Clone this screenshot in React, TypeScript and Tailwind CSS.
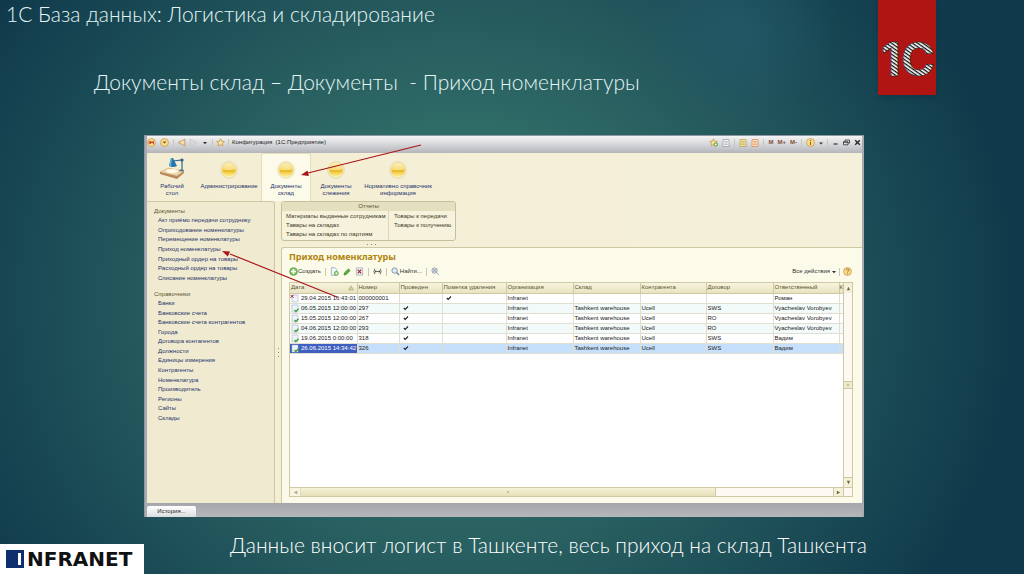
import type { ReactNode } from "react";

interface DocRow {
    state: "deleted" | "posted";
    date: string;
    number: string;
    posted: boolean;
    marked: boolean;
    org: string;
    store: string;
    agent: string;
    contract: string;
    person: string;
}

const rows: DocRow[] = [
    { state: "deleted", date: "29.04.2015 16:43:01", number: "000000001", posted: false, marked: true, org: "Infranet", store: "", agent: "", contract: "", person: "Роман" },
    { state: "posted", date: "06.05.2015 12:00:00", number: "297", posted: true, marked: false, org: "Infranet", store: "Tashkent warehouse", agent: "Ucell", contract: "SWS", person: "Vyacheslav Vorobyev" },
    { state: "posted", date: "15.05.2015 12:00:00", number: "267", posted: true, marked: false, org: "Infranet", store: "Tashkent warehouse", agent: "Ucell", contract: "RO", person: "Vyacheslav Vorobyev" },
    { state: "posted", date: "04.06.2015 12:00:00", number: "293", posted: true, marked: false, org: "Infranet", store: "Tashkent warehouse", agent: "Ucell", contract: "RO", person: "Vyacheslav Vorobyev" },
    { state: "posted", date: "19.06.2015 0:00:00", number: "318", posted: true, marked: false, org: "Infranet", store: "Tashkent warehouse", agent: "Ucell", contract: "SWS", person: "Вадим" },
    { state: "posted", date: "26.06.2015 14:34:42", number: "326", posted: true, marked: false, org: "Infranet", store: "Tashkent warehouse", agent: "Ucell", contract: "SWS", person: "Вадим" },
];

const documents = [
    "Акт приёмо передачи сотруднику",
    "Оприходование номенклатуры",
    "Перемещение номенклатуры",
    "Приход номенклатуры",
    "Приходный ордер на товары",
    "Расходный ордер на товары",
    "Списание номенклатуры",
];

const catalogs = [
    "Банки",
    "Банковские счета",
    "Банковские счета контрагентов",
    "Города",
    "Договора контагентов",
    "Должности",
    "Единицы измерения",
    "Контрагенты",
    "Номенклатура",
    "Производитель",
    "Регионы",
    "Сайты",
    "Склады",
];

const columns = ["Дата", "Номер", "Проведен", "Пометка удаления", "Организация", "Склад", "Контрагента", "Договор", "Ответственный"];

const Divider = () => <span className="h-2 w-px shrink-0 bg-[#c9c6b4]" />;

const Tick = () => (
    <svg className="size-[6px]" viewBox="0 0 6 6" fill="none" stroke="#222" strokeWidth="1.1">
        <path d="M.8 3l1.400 1.500L5 1.500" />
    </svg>
);

const Ball = () => (
    <svg className="size-[18px]" viewBox="0 0 18 18">
        <defs>
            <linearGradient id="ball" x1="0" y1="0" x2="0" y2="1">
                <stop offset="0" stopColor="#fbe793" />
                <stop offset=".45" stopColor="#f3cd3c" />
                <stop offset=".55" stopColor="#eec02a" />
                <stop offset="1" stopColor="#fdf3a4" />
            </linearGradient>
        </defs>
        <circle cx="9" cy="9" r="8.200" fill="#f8f0cf" stroke="#dccb92" strokeWidth=".7" />
        <circle cx="9" cy="9" r="6.900" fill="url(#ball)" />
        <path d="M3 8.200a6 5.400 0 0 1 12 0q-6 1.800-12 0z" fill="#fff" opacity=".35" />
        <path d="M3.200 9.800q5.800 1.600 11.600 0" stroke="#e0b02c" strokeWidth=".6" fill="none" />
    </svg>
);

const Desk = () => (
    <svg className="h-[22px] w-[26px]" viewBox="0 0 26 22">
        <path d="M1 15l8-4 16 3-7 5z" fill="#efd7ac" stroke="#c79f6a" strokeWidth=".5" />
        <path d="M1 15l17 4 7-5v2l-7 6L1 17z" fill="#b98a5c" />
        <ellipse cx="13" cy="14" rx="6" ry="2" fill="#fffbe6" />
        <path d="M12 1h2l4 8q-4 2-8 0z" fill="#2777ab" />
        <path d="M12 1h1l-1 8-2-.5z" fill="#64b6d8" />
        <path d="M14 4l9-1v10" fill="none" stroke="#35678f" strokeWidth="1.200" />
        <circle cx="23" cy="3" r="1.600" fill="#315f8c" />
        <ellipse cx="22.500" cy="13.500" rx="2.500" ry="1" fill="#587791" />
    </svg>
);

const Star = ({ add }: { add?: boolean }) => (
    <svg className="size-[9px]" viewBox="0 0 10 10">
        <path d="M5 .8l1.300 2.800 3 .3-2.300 2 .7 3L5 7.400 2.300 8.900l.7-3-2.300-2 3-.3z" fill="#fbe2a0" stroke="#c49042" strokeWidth=".8" />
        {add && <circle cx="7.500" cy="7.300" r="2.400" fill="#5fae4a" />}
        {add && <path d="M7.500 6v2.600M6.200 7.300h2.600" stroke="#fff" strokeWidth=".8" />}
    </svg>
);

const Sheet = ({ fill, line }: { fill: string; line: string }) => (
    <svg className="size-2" viewBox="0 0 8 8">
        <path d="M1 .5h6v7H1z" fill={fill} stroke={line} strokeWidth=".7" />
        <path d="M2.300 2.500h3.400M2.300 4h3.400M2.300 5.500h3.400" stroke={line} strokeWidth=".6" />
    </svg>
);

const Orb = ({ children }: { children: ReactNode }) => (
    <svg className="size-[9px]" viewBox="0 0 10 10">
        <circle cx="5" cy="5" r="4.400" fill="#fbdc8b" stroke="#c3974c" strokeWidth=".8" />
        {children}
    </svg>
);

const TitleBar = () => (
    <div className="flex h-[17px] items-center bg-linear-to-b from-[#f4f4f5] via-[#d5d6d9] to-[#b4b5ba] pr-px pb-1 text-[#222]">
        <div className="flex flex-1 items-center gap-[3px] whitespace-nowrap">
            <button aria-label="1С">
                <Orb><path d="M2.500 3.500v3M4 6.500v-3l1.500 2 1.500-2v3h1" stroke="#c0261b" strokeWidth="1" fill="none" /></Orb>
            </button>
            <button aria-label="Меню" className="px-px">
                <Orb><path d="M3 4h4L5 6.500z" fill="#7a5420" /></Orb>
            </button>
            <Divider />
            <button aria-label="Назад">
                <svg className="size-[9px]" viewBox="0 0 8 8"><path d="M7 1v6L1 4z" fill="#f8dcae" stroke="#bb8b52" strokeWidth=".7" /></svg>
            </button>
            <button aria-label="Вперед">
                <svg className="size-[9px]" viewBox="0 0 8 8"><path d="M1 1v6l6-3z" fill="#d9d9da" stroke="#c4c4c4" strokeWidth=".6" /></svg>
            </button>
            <button aria-label="Список">
                <svg className="size-2" viewBox="0 0 8 8"><path d="M2 3h4L4 5.200z" fill="#333" /></svg>
            </button>
            <Divider />
            <button aria-label="Избранное"><Star /></button>
            <Divider />
            <h2 className="whitespace-pre">Конфигурация  (1С:Предприятие)</h2>
        </div>
        <div className="flex items-center gap-1 font-bold text-[#7c5138]">
            <button aria-label="Добавить в избранное"><Star add /></button>
            <button aria-label="Ссылка"><Sheet fill="#fafafa" line="#8a94a0" /></button>
            <Divider />
            <button aria-label="Калькулятор"><Sheet fill="#f5e4a0" line="#b09a50" /></button>
            <button aria-label="Календарь"><Sheet fill="#fbe0c0" line="#d98852" /></button>
            <Divider />
            <button>M</button>
            <button>M+</button>
            <button>M-</button>
            <Divider />
            <button aria-label="Информация">
                <Orb><path d="M5 2.200v1.200M5 4.300v3.500" stroke="#8c6428" strokeWidth="1.200" /></Orb>
            </button>
            <svg className="size-1" viewBox="0 0 4 4"><path d="M0 1.500h4L2 3.500z" fill="#333" /></svg>
            <Divider />
            <button aria-label="Свернуть">
                <svg className="size-[7px]" viewBox="0 0 7 7"><path d="M1.500 5h4" stroke="#333" strokeWidth="1.200" /></svg>
            </button>
            <button aria-label="Восстановить">
                <svg className="size-[7px]" viewBox="0 0 7 7" fill="none" stroke="#333" strokeWidth=".8"><path d="M2 2.500V1h4.500v3H5M.5 2.800H5v3H.5zM.5 3.200H5" /></svg>
            </button>
            <button aria-label="Закрыть">
                <svg className="size-[7px]" viewBox="0 0 7 7" stroke="#222" strokeWidth="1.300"><path d="M1.200 1.200l4.600 4.600M5.800 1.200L1.200 5.800" /></svg>
            </button>
        </div>
    </div>
);

const Sections = () => (
    <nav className="flex h-12 text-center leading-[7px] text-[#26326c]">
        <a href="#desk" className="flex w-[50px] flex-col items-center pt-1">
            <Desk />
            <span className="mt-1">Рабочий<br />стол</span>
        </a>
        <a href="#admin" className="flex w-16 flex-col items-center pt-2">
            <Ball />
            <span className="mt-1">Администрирование</span>
        </a>
        <a href="#store" className="flex w-[50px] flex-col items-center rounded-t-[3px] border border-b-0 border-[#e2dcb9] bg-[#fcfae8] pt-[7px]">
            <Ball />
            <span className="mt-1">Документы<br />склад</span>
        </a>
        <a href="#track" className="flex w-[50px] flex-col items-center pt-2">
            <Ball />
            <span className="mt-1">Документы<br />слежения</span>
        </a>
        <a href="#info" className="flex w-[74px] flex-col items-center pt-2">
            <Ball />
            <span className="mt-1 whitespace-nowrap">Нормативно справочник<br />информация</span>
        </a>
    </nav>
);

const SideBar = () => (
    <aside className="w-32 shrink-0 rounded-tr-[3px] border-t border-r border-[#cdc7a4] bg-[#f0ebd0] pt-[5px] pl-[7px] whitespace-nowrap text-[#26326c]">
        <h3 className="leading-[9px] text-[#5c5433]">Документы</h3>
        <ul className="grid h-[67px] auto-rows-fr items-center pl-1">
            {documents.map((item) => <li key={item} className="flex"><a href="#doc" className="leading-[9px]">{item}</a></li>)}
        </ul>
        <h3 className="mt-[7px] leading-[9px] text-[#5c5433]">Справочники</h3>
        <ul className="grid h-[124px] auto-rows-fr items-center pl-1">
            {catalogs.map((item) => <li key={item} className="flex"><a href="#cat" className="leading-[9px]">{item}</a></li>)}
        </ul>
    </aside>
);

const Reports = () => (
    <section className="w-[175px] overflow-hidden rounded-[3px] border border-[#c5bf9b] bg-[#f6f2dc] whitespace-nowrap text-[#3c3823]">
        <h3 className="bg-[#e4dfbf] text-center leading-[9px] text-[#5c5433]">Отчеты</h3>
        <div className="flex leading-[9px]">
            <div className="flex w-[107px] flex-col border-r border-[#dcd6b8] pt-px pb-px pl-1">
                <a href="#r1">Материалы выданные сотрудникам</a>
                <a href="#r2">Тавары на складах</a>
                <a href="#r3">Тавары на складах по партиям</a>
            </div>
            <div className="flex flex-col pt-px pl-[5px]">
                <a href="#r4">Товары к передачи</a>
                <a href="#r5">Товары к получению</a>
            </div>
        </div>
    </section>
);

const ToolBar = () => (
    <div className="mt-[3px] flex h-[11px] items-center justify-between pr-px text-[#333]">
        <div className="flex items-center gap-1">
            <button className="flex items-center">
                <svg className="size-[9px]" viewBox="0 0 10 10">
                    <circle cx="5" cy="5" r="4.300" fill="#7cc45c" stroke="#4d9040" strokeWidth=".7" />
                    <path d="M5 2.200v5.600M2.200 5h5.600" stroke="#fff" strokeWidth="1.600" />
                </svg>
                Создать
            </button>
            <Divider />
            <button aria-label="Скопировать">
                <svg className="size-[9px]" viewBox="0 0 10 10">
                    <path d="M1.500.8h4l2 2v6.400h-6z" fill="#f4f8fb" stroke="#7b93ad" strokeWidth=".7" />
                    <circle cx="7" cy="7" r="2.600" fill="#5fae4a" />
                    <path d="M7 5.400v3.200M5.400 7h3.200" stroke="#fff" strokeWidth=".9" />
                </svg>
            </button>
            <button aria-label="Изменить">
                <svg className="size-2" viewBox="0 0 8 8">
                    <path d="M1 7l.6-2.300L5.400 1l1.700 1.600L3.300 6.400z" fill="#5cb338" stroke="#2d7a22" strokeWidth=".7" />
                </svg>
            </button>
            <button aria-label="Пометить на удаление">
                <svg className="size-[9px]" viewBox="0 0 10 10">
                    <path d="M1.500 1h7v8h-7z" fill="#f3f6fa" stroke="#8a9bb0" strokeWidth=".7" />
                    <path d="M3 3l4 4M7 3L3 7" stroke="#a61f28" strokeWidth="1.300" />
                </svg>
            </button>
            <Divider />
            <button aria-label="Интервал">
                <svg className="size-[9px]" viewBox="0 0 10 10" fill="none" stroke="#333" strokeWidth=".8">
                    <path d="M2 2Q0 5 2 8M8 2q2 3 0 6M2.200 5h5.600M3.500 3.800L2.200 5l1.300 1.200M6.500 3.800L7.800 5 6.500 6.200" />
                </svg>
            </button>
            <Divider />
            <button className="flex items-center">
                <svg className="size-[9px]" viewBox="0 0 10 10">
                    <circle cx="4" cy="4" r="3" fill="#dcecf8" stroke="#68839f" strokeWidth=".9" />
                    <path d="M6.200 6.200L9 9" stroke="#68839f" strokeWidth="1.500" />
                </svg>
                Найти...
            </button>
            <Divider />
            <button aria-label="Отменить поиск">
                <svg className="size-[9px]" viewBox="0 0 10 10">
                    <circle cx="4" cy="4" r="3" fill="#d6dde3" stroke="#8c9aa6" strokeWidth=".9" />
                    <path d="M6.200 6.200L9 9M2 2l4 4M6 2L2 6" stroke="#8c9aa6" strokeWidth=".9" />
                </svg>
            </button>
        </div>
        <div className="flex items-center gap-[3px]">
            <button className="flex items-center gap-[2px]">
                Все действия
                <svg className="size-1" viewBox="0 0 4 4"><path d="M0 1h4L2 3.200z" fill="#333" /></svg>
            </button>
            <Divider />
            <button aria-label="Справка">
                <Orb><path d="M3.500 3.800q.2-1.500 1.600-1.500 1.500 0 1.500 1.300 0 .9-1.500 1.700v.8M5.100 7v1" stroke="#9a5a20" strokeWidth=".9" fill="none" /></Orb>
            </button>
        </div>
    </div>
);

const RowIcon = ({ state }: { state: DocRow["state"] }) => (
    <svg className="size-[9px] shrink-0" viewBox="0 0 9 9">
        <path d="M2 1h6v7H2z" fill="#eef4fa" stroke="#a4b7c9" strokeWidth=".6" />
        {state === "deleted"
            ? <path d="M.5.8l3 3M3.500.8l-3 3" stroke="#a3202a" strokeWidth="1" />
            : <path d="M4.500 6l1.300 1.500L8.500 4.800" stroke="#3f9c35" strokeWidth="1.300" fill="none" />}
    </svg>
);

const DocTable = () => (
    <table className="w-full table-fixed border-collapse text-left leading-[9px] whitespace-nowrap text-[#222]">
        <colgroup>
            <col className="w-[67px]" />
            <col className="w-[42px]" />
            <col className="w-[43px]" />
            <col className="w-16" />
            <col className="w-[67px]" />
            <col className="w-[67px]" />
            <col className="w-[66px]" />
            <col className="w-[67px]" />
            <col className="w-[66px]" />
            <col className="w-[5px]" />
        </colgroup>
        <thead>
            <tr className="h-[10px] bg-linear-to-b from-[#f8f4de] to-[#e9e3c0] text-[#5c5433]">
                {columns.map((name, i) => (
                    <th key={name} className="border-r border-b border-[#cfc8a4] p-0 pl-px font-normal">
                        <span className="flex items-center justify-between">
                            {name}
                            {i === 0 && <svg className="mr-[3px] size-[6px]" viewBox="0 0 6 6"><path d="M3 .8L5.500 5h-5z" fill="#d8d0a4" stroke="#a89f70" strokeWidth=".6" /></svg>}
                        </span>
                    </th>
                ))}
                <th className="border-b border-[#cfc8a4] p-0 font-normal">К</th>
            </tr>
        </thead>
        <tbody>
            {rows.map((r, i) => {
                const active = i === rows.length - 1;
                return (
                    <tr key={r.date} className={active ? "h-[10px] bg-[#c6e0fc]" : i % 2 ? "h-[10px] bg-[#f3fafa]" : "h-[10px] bg-white"}>
                        <td className={active ? "border-r border-b border-[#e0dfd0] bg-[#3f5fc0] p-0 text-white" : "border-r border-b border-[#e0dfd0] p-0"}>
                            <span className="flex items-center gap-[2px]"><RowIcon state={r.state} />{r.date}</span>
                        </td>
                        <td className="border-r border-b border-[#e0dfd0] p-0 pl-px">{r.number}</td>
                        <td className="border-r border-b border-[#e0dfd0] p-0 pl-[3px]">{r.posted && <Tick />}</td>
                        <td className="border-r border-b border-[#e0dfd0] p-0 pl-[3px]">{r.marked && <Tick />}</td>
                        <td className="border-r border-b border-[#e0dfd0] p-0 pl-px">{r.org}</td>
                        <td className="border-r border-b border-[#e0dfd0] p-0 pl-px">{r.store}</td>
                        <td className="border-r border-b border-[#e0dfd0] p-0 pl-px">{r.agent}</td>
                        <td className="border-r border-b border-[#e0dfd0] p-0 pl-px">{r.contract}</td>
                        <td className="border-r border-b border-[#e0dfd0] p-0 pl-px">{r.person}</td>
                        <td className="border-b border-[#e0dfd0] p-0" />
                    </tr>
                );
            })}
        </tbody>
    </table>
);

const Grip = ({ d }: { d: string }) => (
    <svg className="size-[5px]" viewBox="0 0 6 6"><path d={d} fill="#6d6746" /></svg>
);

const DocList = () => (
    <section className="flex flex-1 flex-col rounded-tl-[3px] border-t border-l border-[#cdc7a4] bg-[#fcfbe9] pt-[3px] pr-[9px] pb-[6px] pl-[7px]">
        <h1 className="font-['Noto_Sans',sans-serif] text-[9px] leading-3 font-bold text-[#b0840e]">Приход номенклатуры</h1>
        <ToolBar />
        <div className="mt-[5px] flex flex-1 flex-col border border-[#cfc8a4] bg-white">
            <div className="flex flex-1">
                <div className="min-w-0 flex-1"><DocTable /></div>
                <div className="flex w-[9px] flex-col border-l border-[#cfc8a4] bg-[#fbf9f2]">
                    <button aria-label="Вверх" className="flex h-[10px] items-center justify-center bg-[#f5f1d9]"><Grip d="M3 1l2 4H1z" /></button>
                    <div className="flex-1" />
                    <div className="flex h-2 items-center justify-center border-y border-[#cfc8a4] bg-[#efe9c8]"><span className="size-[2px] bg-[#c9c08f]" /></div>
                    <div className="flex-1" />
                    <button aria-label="Вниз" className="flex h-[10px] items-center justify-center border-t border-[#cfc8a4] bg-[#f5f1d9]"><Grip d="M1 1h4L3 5z" /></button>
                </div>
            </div>
            <div className="flex h-[9px] border-t border-[#cfc8a4] bg-[#fbf9f2]">
                <button aria-label="Влево" className="flex w-[11px] items-center justify-center border-r border-[#cfc8a4] bg-[#f5f1d9] opacity-60"><Grip d="M5 1v4L1 3z" /></button>
                <div className="flex-1">
                    <div className="flex h-full w-[78%] items-center justify-center border-r border-[#cfc8a4] bg-linear-to-b from-[#f6f2d8] to-[#e6dfb8]"><span className="size-[2px] bg-[#c9c08f]" /></div>
                </div>
                <button aria-label="Вправо" className="flex w-[11px] items-center justify-center border-x border-[#cfc8a4] bg-[#f5f1d9]"><Grip d="M1 1v4l4-2z" /></button>
                <div className="w-2" />
            </div>
        </div>
    </section>
);

const Arrows = () => (
    <svg className="pointer-events-none absolute top-0 left-0 h-[170px] w-[290px]" viewBox="0 0 290 170" stroke="#a81418" fill="#a81418">
        <path d="M276 9L163 37M192 161L85 118" strokeWidth="1.200" fill="none" />
        <path d="M156 39l6.500-4.500 1.400 5.400zM77 115l8 .4-2.200 5.200z" stroke="none" />
    </svg>
);

const App = () => {
    return (
        <div className="flex min-h-screen flex-col bg-[radial-gradient(circle_at_72%_5%,#235a6cb0_0,#235a6c00_11%),radial-gradient(ellipse_66%_110%_at_45%_52%,#37756a_0%,#306d68_25%,#265b5e_45%,#1b4c56_62%,#103a4b_82%)] font-['Liberation_Sans',Arial,sans-serif]">
            <header className="flex h-[135px] items-start justify-between pr-[88px] font-['Lato',sans-serif] text-[21px] leading-7 font-light text-[#e4f6f6]">
                <div>
                    <p className="pl-[6px]">1С База данных: Логистика и складирование</p>
                    <p className="mt-10 pl-[94px] whitespace-pre">Документы склад – Документы  - Приход номенклатуры</p>
                </div>
                <div className="h-[95px] w-[58px] bg-[#b01513] shadow-md">
                    <svg className="h-full w-full" viewBox="0 0 58 95">
                        <defs>
                            <pattern id="hatch" width="3" height="3" patternUnits="userSpaceOnUse" patternTransform="rotate(35)">
                                <rect width="3" height="3" fill="#fff" />
                                <rect width="3" height="1.300" fill="#111" />
                            </pattern>
                        </defs>
                        <text x="30" y="76" textAnchor="middle" fontFamily="Inter, sans-serif" fontWeight="700" fontSize="46" fill="url(#hatch)" stroke="#222" strokeWidth=".5">1С</text>
                    </svg>
                </div>
            </header>

            <main className="relative mr-40 ml-36 flex flex-1 flex-col border-t border-l border-[#8b9aa2] bg-[#aaabb0] px-[2px] text-[6px]">
                <TitleBar />
                <div className="flex flex-1 flex-col bg-linear-to-r from-[#f3eed3] to-[#f5f0d9]">
                    <Sections />
                    <div className="flex flex-1">
                        <SideBar />
                        <div className="flex w-[6px] shrink-0 flex-col items-center justify-center gap-[3px]">
                            <i className="size-px bg-[#8f8962]" />
                            <i className="size-px bg-[#8f8962]" />
                            <i className="size-px bg-[#8f8962]" />
                        </div>
                        <div className="flex min-w-0 flex-1 flex-col">
                            <Reports />
                            <div className="flex h-[6px] w-[180px] items-center justify-center gap-[3px]">
                                <i className="size-px bg-[#8f8962]" />
                                <i className="size-px bg-[#8f8962]" />
                                <i className="size-px bg-[#8f8962]" />
                            </div>
                            <DocList />
                        </div>
                    </div>
                </div>
                <div className="flex h-[14px] items-end bg-linear-to-b from-[#a5a6ab] to-[#b6b7bb]">
                    <button className="h-[11px] w-[49px] rounded-t-[2px] bg-linear-to-b from-white to-[#dcdde0] leading-[11px] text-[#222]">История...</button>
                </div>
                <Arrows />
            </main>

            <footer className="flex h-[57px] items-end">
                <div className="flex h-[30px] w-36 items-center gap-[3px] bg-white pl-[6px]">
                    <span className="flex h-[18px] w-[18px] justify-end bg-[#0e2f6e] py-[3px] pr-[3px]"><i className="w-[3px] bg-white" /></span>
                    <span className="font-['DejaVu_Sans',sans-serif] text-xl leading-5 font-bold text-[#111]">NFRANET</span>
                </div>
                <p className="mb-[15px] ml-[86px] font-['Lato',sans-serif] text-[21px] leading-7 font-light text-white">Данные вносит логист в Ташкенте, весь приход на склад Ташкента</p>
            </footer>
        </div>
    );
};

export default App;
